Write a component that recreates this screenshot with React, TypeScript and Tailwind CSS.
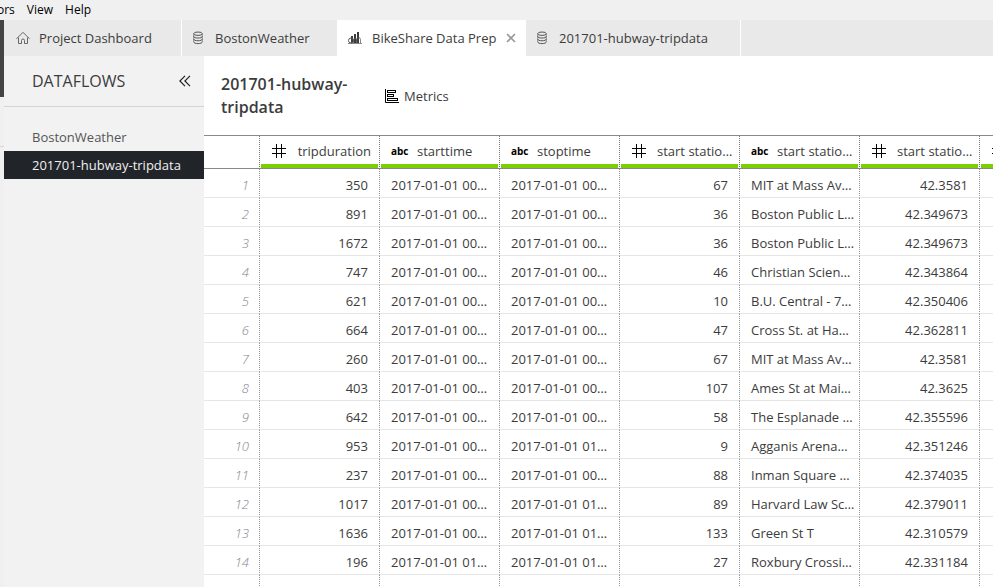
import type { ReactNode } from "react";

function HomeIcon() {
  return (
    <svg width="14" height="14" viewBox="0 0 14 14" fill="none" stroke="#666" strokeWidth="1" aria-hidden="true">
      <path d="M0.5 7.8 L7 1.3 L13.5 7.8" />
      <path d="M2.5 6.5v6h3V9.500a1.5 1.5 0 0 1 3 0v3h3v-6" />
    </svg>
  );
}

function DatabaseIcon() {
  return (
    <svg width="10" height="14" viewBox="0 0 10 14" fill="none" stroke="#555" strokeWidth="1" aria-hidden="true">
      <ellipse cx="5" cy="2.7" rx="4.3" ry="1.7" />
      <path d="M0.7 2.7v8.2M9.3 2.7v8.2" strokeOpacity="0.6" />
      <path d="M0.7 5.4c0 2.2 8.6 2.2 8.6 0M0.7 8.1c0 2.2 8.6 2.2 8.6 0M0.7 10.8c0 2.4 8.6 2.4 8.6 0" />
    </svg>
  );
}

function FlowIcon() {
  return (
    <svg width="14" height="14" viewBox="0 0 14 14" aria-hidden="true">
      <g fill="#3c3c3c">
        <rect x="3" y="5" width="2" height="7" />
        <rect x="6" y="3" width="2" height="9" />
        <rect x="9" y="1" width="2" height="11" />
      </g>
      <g fill="none" stroke="#555">
        <circle cx="3" cy="9.5" r="2.5" />
        <path d="M5.5 12V9a1.500 1.500 0 0 1 3 0v3M8.5 12V8.500a2 2 0 0 1 4 0V12M0 12.5h14" strokeOpacity="0.7" />
      </g>
    </svg>
  );
}

function CloseIcon() {
  return (
    <svg width="10" height="10" viewBox="0 0 10 10" stroke="#999" strokeWidth="1.6" aria-hidden="true">
      <path d="M1 1l8 8M9 1l-8 8" />
    </svg>
  );
}

function CollapseIcon() {
  return (
    <svg width="12" height="12" viewBox="0 0 12 12" fill="none" stroke="#222" strokeWidth="1.2" aria-hidden="true">
      <path d="M6 0.8 L0.9 6 L6 11.2M11 0.8 L5.9 6 L11 11.2" />
    </svg>
  );
}

function MetricsIcon() {
  return (
    <svg width="14" height="14" viewBox="0 0 14 14" fill="none" stroke="#000" aria-hidden="true">
      <path d="M0.5 0v13.5H14" />
      <rect x="2.5" y="1.5" width="8" height="2" />
      <rect x="2.5" y="5.5" width="6" height="2" />
      <rect x="2.5" y="9.5" width="10" height="2" />
    </svg>
  );
}

function HashIcon() {
  return (
    <svg className="shrink-0" width="14" height="14" viewBox="0 0 14 14" stroke="#000" fill="none" aria-hidden="true">
      <path d="M4.5 0v14M9.5 0v14M0 4.5h14M0 9.5h14" />
    </svg>
  );
}

type Kind = "number" | "text";

const columns: { kind: Kind; label: string }[] = [
  { kind: "number", label: "tripduration" },
  { kind: "text", label: "starttime" },
  { kind: "text", label: "stoptime" },
  { kind: "number", label: "start statio…" },
  { kind: "text", label: "start statio…" },
  { kind: "number", label: "start statio…" },
  { kind: "number", label: "" },
];

const T0 = "2017-01-01 00…";
const T1 = "2017-01-01 01…";

const rows: string[][] = [
  ["350", T0, T0, "67", "MIT at Mass Av…", "42.3581"],
  ["891", T0, T0, "36", "Boston Public L…", "42.349673"],
  ["1672", T0, T0, "36", "Boston Public L…", "42.349673"],
  ["747", T0, T0, "46", "Christian Scien…", "42.343864"],
  ["621", T0, T0, "10", "B.U. Central - 7…", "42.350406"],
  ["664", T0, T0, "47", "Cross St. at Ha…", "42.362811"],
  ["260", T0, T0, "67", "MIT at Mass Av…", "42.3581"],
  ["403", T0, T0, "107", "Ames St at Mai…", "42.3625"],
  ["642", T0, T0, "58", "The Esplanade …", "42.355596"],
  ["953", T0, T1, "9", "Agganis Arena…", "42.351246"],
  ["237", T0, T0, "88", "Inman Square …", "42.374035"],
  ["1017", T0, T1, "89", "Harvard Law Sc…", "42.379011"],
  ["1636", T0, T1, "133", "Green St T", "42.310579"],
  ["196", T1, T1, "27", "Roxbury Crossi…", "42.331184"],
];

function Tab({ icon, label, width }: { icon: ReactNode; label: string; width: string }) {
  return (
    <button role="tab" aria-selected={false} className={`flex shrink-0 items-center border-r border-white text-left whitespace-nowrap ${width}`}>
      {icon}
      {label}
    </button>
  );
}

function DataTable() {
  return (
    <table className="w-[896px] table-fixed border-separate border-spacing-0 border-t border-[#8a8a8a]">
      <colgroup>
        <col className="w-14" />
        {columns.map((_, i) => (
          <col key={i} className="w-[120px]" />
        ))}
      </colgroup>
      <thead>
        <tr className="h-[33px]">
          <th aria-label="Row" className="border-r border-b border-r-[#777] border-b-[#8a8a8a] p-0 [border-right-style:dotted]" />
          {columns.map((c, i) => (
            <th key={i} className="border-r border-b border-r-[#777] border-b-[#8a8a8a] p-0 px-px font-normal [border-right-style:dotted]">
              <div className="flex h-8 items-center gap-[10px] border-b-4 border-[#7bd000] pt-[2px] pl-[10px] whitespace-nowrap">
                {c.kind === "number" ? (
                  <span className="flex w-4 shrink-0 pl-px">
                    <HashIcon />
                  </span>
                ) : (
                  <span className="w-4 shrink-0 text-[10px] leading-4 font-bold text-black">abc</span>
                )}
                <span className={c.kind === "number" ? "flex-1 pr-[7px] text-right" : ""}>{c.label}</span>
              </div>
            </th>
          ))}
        </tr>
      </thead>
      <tbody>
        {rows.map((row, r) => (
          <tr key={r} className="h-[29px]">
            <th scope="row" className="border-r border-b border-r-[#999] border-b-[#e6e6e6] p-0 pt-1 pr-[10px] text-right font-light text-[#80858f] italic [border-right-style:dotted]">
              {r + 1}
            </th>
            {columns.map((c, i) => (
              <td
                key={i}
                className={`border-r border-b border-r-[#999] border-b-[#e6e6e6] p-0 pt-1 whitespace-nowrap [border-right-style:dotted] ${
                  c.kind === "number" ? "pr-[11px] text-right" : "pl-[11px]"
                }`}
              >
                {row[i]}
              </td>
            ))}
          </tr>
        ))}
        <tr className="h-[29px]" aria-hidden="true">
          <td className="border-r border-dotted border-[#999] p-0" />
          {columns.map((_, i) => (
            <td key={i} className="border-r border-dotted border-[#999] p-0" />
          ))}
        </tr>
      </tbody>
    </table>
  );
}

export default function App() {
  return (
    <div className="flex h-screen flex-col overflow-hidden bg-white font-['Open_Sans','Noto_Sans',sans-serif] text-[13px] leading-5 text-[#3c3c3c]">
      <nav className="flex h-5 shrink-0 gap-3 bg-[#f0f0f0] text-xs leading-5 text-black">
        <button className="-ml-[3px]">ors</button>
        <button>View</button>
        <button>Help</button>
      </nav>
      <div className="flex min-h-0 flex-1">
        <div className="flex w-1 shrink-0 flex-col bg-[#f0f0f0]">
          <div className="h-[77px] bg-[#444]" />
          <div className="h-[50px] border-b border-[#d8d8d8]" />
        </div>
        <div className="flex min-w-0 flex-1 flex-col">
          <div role="tablist" className="flex h-9 shrink-0 bg-[#e9e9e9]">
            <Tab icon={<HomeIcon />} label="Project Dashboard" width="w-[178px] pl-3 gap-[9px]" />
            <Tab icon={<DatabaseIcon />} label="BostonWeather" width="w-[156px] pl-[11px] gap-3" />
            <div className="flex w-[188px] shrink-0 items-center bg-white pl-[10px]">
              <button role="tab" aria-selected={true} className="flex items-center gap-[10px] whitespace-nowrap">
                <FlowIcon />
                BikeShare Data Prep
              </button>
              <button aria-label="Close tab" className="ml-auto pr-[10px]">
                <CloseIcon />
              </button>
            </div>
            <Tab icon={<DatabaseIcon />} label="201701-hubway-tripdata" width="w-[215px] pl-[11px] gap-3" />
          </div>
          <div className="flex min-h-0 flex-1">
            <aside className="w-[200px] shrink-0 bg-[#f2f2f2]">
              <div className="flex h-[51px] items-center justify-between border-b border-[#d4d4d4] pr-[13px] pl-7">
                <h2 className="text-base font-medium">DATAFLOWS</h2>
                <button aria-label="Collapse panel">
                  <CollapseIcon />
                </button>
              </div>
              <div className="flex flex-col pt-4">
                <button className="h-7 pl-7 text-left text-[#555]">BostonWeather</button>
                <button className="h-7 bg-[#212429] pl-7 text-left text-[#f0f0f0]">201701-hubway-tripdata</button>
              </div>
            </aside>
            <main className="min-w-0 flex-1 overflow-hidden">
              <header className="flex h-[79px] items-center px-[17px]">
                <h1 className="w-[164px] text-base leading-[23px] font-semibold">
                  201701-hubway-
                  <wbr />
                  tripdata
                </h1>
                <button className="flex items-center gap-[5px]">
                  <MetricsIcon />
                  Metrics
                </button>
              </header>
              <DataTable />
            </main>
          </div>
        </div>
      </div>
    </div>
  );
}
